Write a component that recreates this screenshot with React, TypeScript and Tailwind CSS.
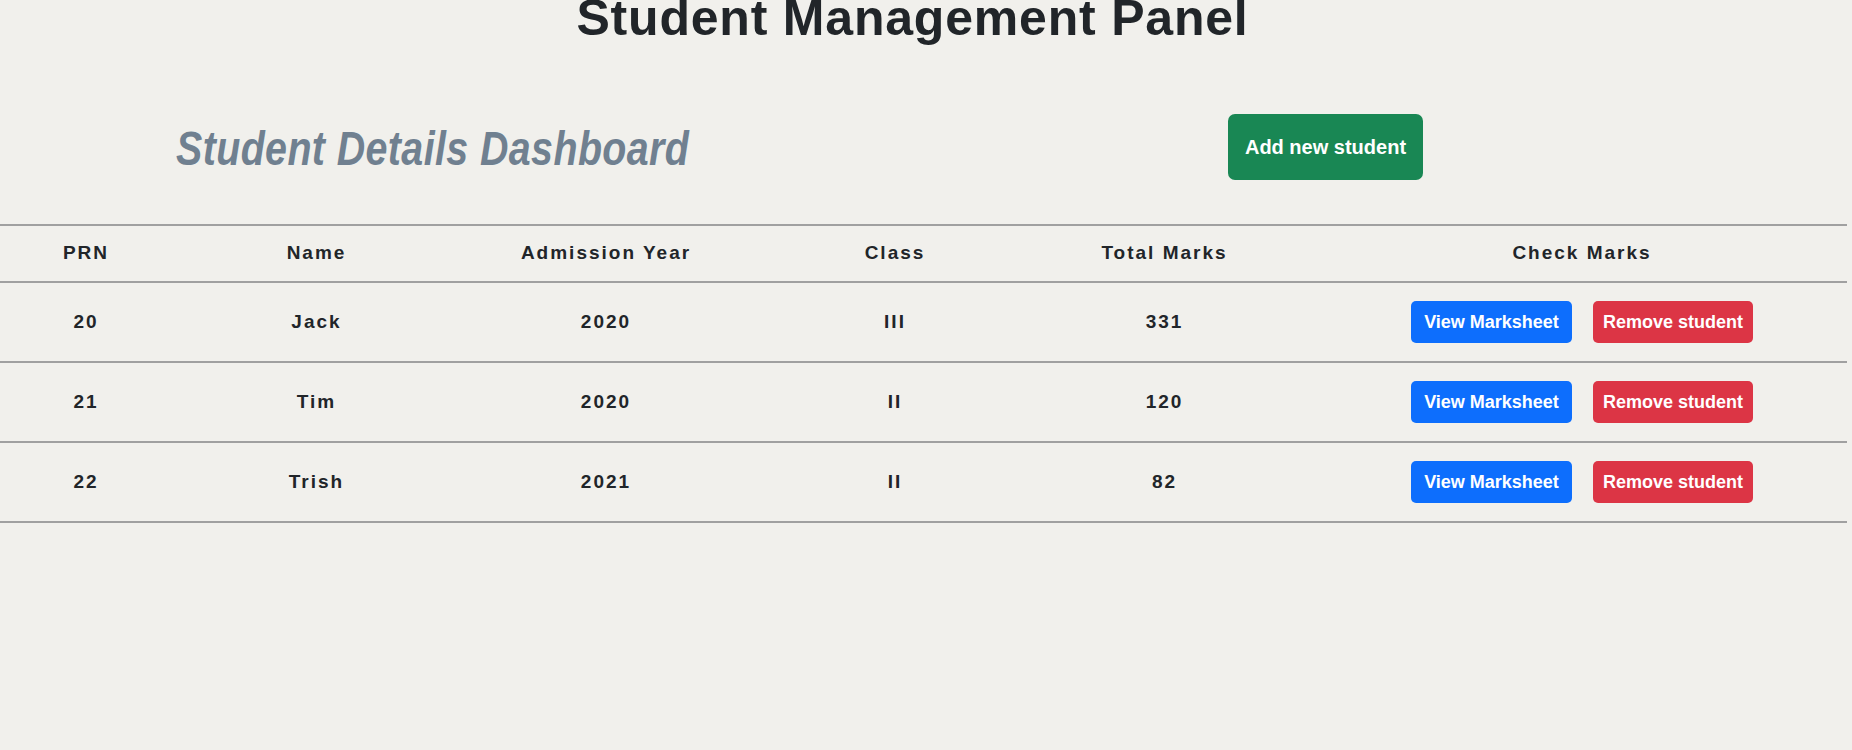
import React from 'react';

const students = [
  { prn: '20', name: 'Jack', year: '2020', cls: 'III', marks: '331' },
  { prn: '21', name: 'Tim', year: '2020', cls: 'II', marks: '120' },
  { prn: '22', name: 'Trish', year: '2021', cls: 'II', marks: '82' },
];

const App: React.FC = () => {
  return (
    <div className="min-h-screen w-full overflow-hidden bg-[#f1f0ec] font-['Liberation_Sans',sans-serif] text-[#212529]">
      {/* Page title */}
      <h1 className="-mt-[7px] pr-[27px] text-center text-[50px] font-bold leading-none tracking-[0.8px]">
        Student Management Panel
      </h1>

      {/* Dashboard header */}
      <div className="mt-[71px] flex h-[66px] items-center pl-[176px]">
        <div className="w-[1052px] pt-[3px]">
          <h2 className="origin-left scale-x-[0.82] whitespace-nowrap text-[48px] font-bold italic leading-none tracking-[0.5px] text-[#708090]">
            Student Details Dashboard
          </h2>
        </div>
        <button className="h-[66px] w-[195px] rounded-[7px] bg-[#198754] text-[20px] font-bold text-white">
          Add new student
        </button>
      </div>

      {/* Students table */}
      <div className="mt-[44px] w-[1847px] text-[19px] font-bold tracking-[2px]">
        <div className="grid h-[59px] grid-cols-[172px_289px_290px_288px_251px_1fr] items-center border-y-2 border-[#a0a0a0] text-center">
          <div>PRN</div>
          <div>Name</div>
          <div>Admission Year</div>
          <div>Class</div>
          <div>Total Marks</div>
          <div className="pl-[27px]">Check Marks</div>
        </div>
        {students.map((s) => (
          <div
            key={s.prn}
            className="grid h-[80px] grid-cols-[172px_289px_290px_288px_251px_1fr] items-center border-b-2 border-[#a0a0a0] text-center"
          >
            <div>{s.prn}</div>
            <div>{s.name}</div>
            <div>{s.year}</div>
            <div>{s.cls}</div>
            <div>{s.marks}</div>
            <div className="flex justify-center gap-[21px] pl-[27px] tracking-normal">
              <button className="h-[42px] w-[161px] rounded-[5px] bg-[#0d6efd] text-[18px] font-bold text-white">
                View Marksheet
              </button>
              <button className="h-[42px] w-[160px] rounded-[5px] bg-[#dc3545] text-[18px] font-bold text-white">
                Remove student
              </button>
            </div>
          </div>
        ))}
      </div>
    </div>
  );
};

export default App;
